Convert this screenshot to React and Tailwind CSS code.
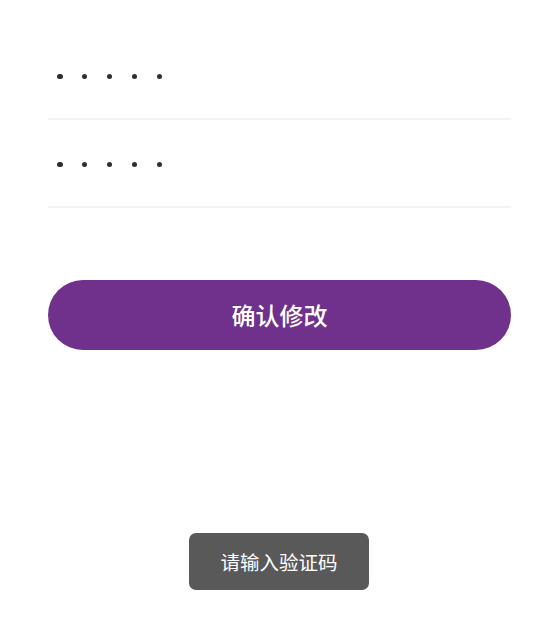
export default function App() {
  const Dots = () => (
    <div className="flex items-center gap-[19.4px] pl-[9px] pt-[3px]">
      {[0, 1, 2, 3, 4].map((i) => (
        <span key={i} className="block w-[5.5px] h-[5.5px] rounded-full bg-[#2f2f2f]" />
      ))}
    </div>
  );
  return (
    <div
      className="relative w-full min-h-[642px] bg-white"
      style={{ fontFamily: '"Noto Sans CJK SC", "Noto Sans", sans-serif' }}
    >
      <div className="pl-12 pr-[46px] pt-8">
        <div className="h-[88px] flex items-center border-b-2 border-[#f2f2f2]">
          <Dots />
        </div>
        <div className="h-[88px] flex items-center border-b-2 border-[#f2f2f2]">
          <Dots />
        </div>
        <button className="mt-[72px] w-full h-[70px] rounded-full bg-[#6f318b] text-white text-[24px] font-medium flex items-center justify-center">
          确认修改
        </button>
      </div>
      <div className="absolute left-[189px] top-[533px] w-[180px] h-[57px] rounded-[7px] bg-[#595959] text-white text-[19.5px] flex items-center justify-center">
        请输入验证码
      </div>
    </div>
  );
}
